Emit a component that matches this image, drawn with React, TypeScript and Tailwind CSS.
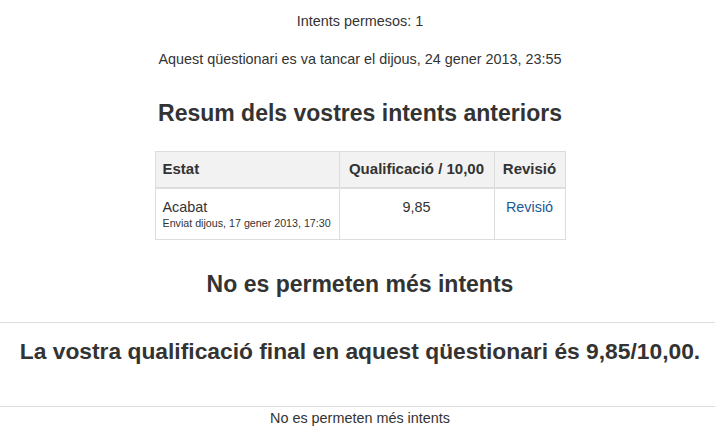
import React from 'react';

const App: React.FC = () => {
  return (
    <div className="w-[715px] overflow-hidden bg-white">
      <div className="w-[720px] text-[#333] text-[14.4px] leading-[20px] font-['Liberation_Sans',Arial,sans-serif] text-center">
        <p className="pt-[11px]">Intents permesos: 1</p>
        <p className="mt-[18px]">Aquest qüestionari es va tancar el dijous, 24 gener 2013, 23:55</p>

        <h3 className="mt-[31px] text-[23px] leading-[26px] font-bold">Resum dels vostres intents anteriors</h3>

        <table className="mx-auto mt-[25px] w-[411px] border-collapse text-left">
          <thead>
            <tr className="bg-[#f2f2f2]">
              <th className="w-[184px] h-[36px] border border-[#ddd] border-b-2 px-[7px] text-[15px] font-bold">Estat</th>
              <th className="w-[155px] border border-[#ddd] border-b-2 px-[7px] text-[15px] font-bold text-center">Qualificació / 10,00</th>
              <th className="border border-[#ddd] border-b-2 px-[7px] text-[15px] font-bold text-center">Revisió</th>
            </tr>
          </thead>
          <tbody>
            <tr>
              <td className="h-[52px] border border-[#ddd] px-[7px] pt-[8px] align-top">
                <div>Acabat</div>
                <div className="text-[10.7px] leading-[13px]">Enviat dijous, 17 gener 2013, 17:30</div>
              </td>
              <td className="border border-[#ddd] px-[7px] pt-[8px] align-top text-center">9,85</td>
              <td className="border border-[#ddd] px-[7px] pt-[8px] align-top text-center">
                <a href="#" className="text-[#1a5a96]">Revisió</a>
              </td>
            </tr>
          </tbody>
        </table>

        <h3 className="mt-[31px] text-[23px] leading-[26px] font-bold">No es permeten més intents</h3>
      </div>

      <hr className="mt-[25px] border-t border-[#ddd]" />
      <div className="w-[720px] text-[#333] text-[14.4px] leading-[20px] font-['Liberation_Sans',Arial,sans-serif] text-center">
        <h3 className="mt-[15px] text-[22.8px] leading-[26px] font-bold">La vostra qualificació final en aquest qüestionari és 9,85/10,00.</h3>
      </div>
      <hr className="mt-[42px] border-t border-[#ddd]" />
      <div className="w-[720px] text-[#333] text-[14.4px] leading-[20px] font-['Liberation_Sans',Arial,sans-serif] text-center">
        <p className="mt-[1px]">No es permeten més intents</p>
      </div>
    </div>
  );
};

export default App;
